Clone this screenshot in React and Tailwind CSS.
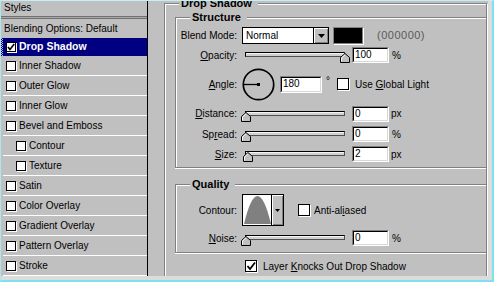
import React from "react";

function Check({ big }) {
  if (big)
    return (
      <svg width="10" height="10" viewBox="0 0 10 10" className="block">
        <path d="M1.5 5 L4 8 L9 1.5" fill="none" stroke="#000" strokeWidth="1.8" />
      </svg>
    );
  return (
    <svg width="8" height="8" viewBox="0 0 8 8" className="block">
      <path d="M1 4 L3 6.5 L7.2 1" fill="none" stroke="#000" strokeWidth="1.6" />
    </svg>
  );
}

function Box({ checked = false, big = false }) {
  return (
    <span
      className={
        big
          ? "block shrink-0 w-[12px] h-[12px] border border-black bg-white shadow-[1px_1px_0_#fff]"
          : "block shrink-0 w-[10px] h-[10px] border border-black bg-white shadow-[1px_1px_0_#fff]"
      }
    >
      {checked ? <Check big={big} /> : null}
    </span>
  );
}

function Slider({ pos }) {
  return (
    <div className="relative shrink-0 w-[108px] h-[16px] ml-[4px]">
      <div className="mt-[5px] mx-[4px] h-[5px] border border-black border-b-[#505050] border-r-[#505050] bg-[#d0d0d0] shadow-[inset_0_1px_0_#f4f4f4]" />
      <svg className="absolute top-[6px]" style={{ left: pos }} width="10" height="10" viewBox="0 0 10 10">
        <path d="M0.5 9.5V4.5L5 0.5L9.5 4.5V9.5Z" fill="#c0c0c0" stroke="#000" />
        <path d="M1.5 8.5V5L5 1.8" fill="none" stroke="#fff" />
      </svg>
    </div>
  );
}

function Field({ value, wide = false }) {
  return (
    <div
      className={
        wide
          ? "ml-[5px] shrink-0 w-[42px] h-[17px] border border-[#808080] border-b-white border-r-white"
          : "ml-[3px] shrink-0 w-[37px] h-[16px] border border-[#808080] border-b-white border-r-white"
      }
    >
      <div className="h-full border border-black border-b-[#d8d8d8] border-r-[#d8d8d8] bg-white pl-[1px] text-[10px] leading-[12px]">
        {value}
      </div>
    </div>
  );
}

function Label({ children }) {
  return <span className="w-[61px] shrink-0 text-right whitespace-nowrap">{children}</span>;
}

function Title({ children }) {
  return (
    <span className="absolute -top-[7px] left-[14px] bg-[#c0c0c0] pl-[2px] pr-[6px] font-bold text-[11px] leading-[13px] whitespace-nowrap">
      {children}
    </span>
  );
}

const listItems = [
  { t: "Inner Shadow" },
  { t: "Outer Glow" },
  { t: "Inner Glow" },
  { t: "Bevel and Emboss" },
  { t: "Contour", sub: true },
  { t: "Texture", sub: true },
  { t: "Satin" },
  { t: "Color Overlay" },
  { t: "Gradient Overlay" },
  { t: "Pattern Overlay" },
  { t: "Stroke" },
];

export default function App() {
  return (
    <div className="w-[494px] h-[282px] overflow-hidden border-t border-l border-r-2 border-b-2 border-t-[#c4f0f5] border-l-[#a8e8f0] border-r-[#7ee2ee] border-b-[#7ee2ee] bg-[#dcdcdc] font-['Liberation_Sans',Arial,sans-serif] text-[10px] text-black">
      <div className="w-[487px] h-[275px] bg-[#c0c0c0] flex overflow-hidden">
        {/* Left styles list */}
        <div className="w-[147px] shrink-0 border-r border-black flex flex-col">
          <div className="h-[18px] pl-[3px] leading-[14px]">Styles</div>
          <div className="h-px bg-[#707070]" />
          <div className="h-px bg-[#a8a8a8]" />
          <div className="h-px bg-[#707070]" />
          <div className="h-[19px] pl-[3px] leading-[19px] whitespace-nowrap">Blending Options: Default</div>
          <div className="h-[21px] flex">
            <div className="w-[2px] bg-[repeating-conic-gradient(#000080_0_25%,#c0c0c0_0_50%)] bg-[length:2px_2px]" />
            <div className="flex-1 bg-[#000080] flex items-center pl-[3px]">
              <Box checked />
              <span className="ml-[3px] text-white font-bold text-[10.5px]">Drop Shadow</span>
            </div>
          </div>
          {listItems.map((it) => (
            <div
              key={it.t}
              className={
                it.sub
                  ? "shrink-0 h-[20px] ml-[2px] border-b border-white flex items-center pl-[13px]"
                  : "shrink-0 h-[20px] ml-[2px] border-b border-white flex items-center pl-[3px]"
              }
            >
              <Box />
              <span className="ml-[3px] whitespace-nowrap">{it.t}</span>
            </div>
          ))}
        </div>

        {/* Right settings */}
        <div className="flex-1 pl-[16px] pt-[2px]">
          <div className="relative w-[323px] border border-[#808080] shadow-[inset_1px_1px_0_#fff,1px_1px_0_#fff] pl-[10px] pt-[13px] pb-[20px]">
            <Title>Drop Shadow</Title>

            {/* Structure */}
            <div className="relative border border-r-0 border-[#808080] shadow-[inset_1px_1px_0_#fff,0_1px_0_#fff] pt-[8px] pb-[3px]">
              <Title>Structure</Title>
              <div className="flex items-center h-[19px]">
                <Label>Blend Mode:</Label>
                <div className="ml-[5px] flex shrink-0 w-[87px] h-[17px] border border-black bg-white">
                  <span className="flex-1 pl-[3px] leading-[15px]">Normal</span>
                  <div className="w-[15px] h-full border-l border-black bg-[#c0c0c0] shadow-[inset_1px_1px_0_#fff,inset_-1px_-1px_0_#808080] flex items-center justify-center">
                    <svg width="7" height="4" viewBox="0 0 7 4" className="block">
                      <path d="M0 0H7L3.5 4Z" fill="#000" />
                    </svg>
                  </div>
                </div>
                <div className="ml-[4px] shrink-0 w-[30px] h-[17px] border border-[#808080] bg-black shadow-[1px_1px_0_#fff]" />
                <span className="ml-[14px] text-[11px] tracking-[0.5px] text-[#5a5a5a]">(000000)</span>
              </div>

              <div className="flex items-center h-[20px]">
                <Label>
                  <span className="underline">O</span>pacity:
                </Label>
                <Slider pos={99} />
                <Field value="100" />
                <span className="ml-[3px]">%</span>
              </div>

              <div className="flex items-center h-[38px]">
                <Label>
                  <span className="underline">A</span>ngle:
                </Label>
                <svg className="ml-[5px] shrink-0 block" width="33" height="33" viewBox="0 0 33 33">
                  <circle cx="16.5" cy="16.5" r="15.2" fill="none" stroke="#000" strokeWidth="1.7" />
                  <path d="M1.5 16.5H16.5" stroke="#000" strokeWidth="1.3" />
                  <rect x="15" y="15" width="3" height="3" fill="#000" />
                </svg>
                <Field value="180" wide />
                <span className="self-start mt-[11px] ml-[4px] leading-[10px]">°</span>
                <div className="ml-[7px]">
                  <Box big />
                </div>
                <span className="ml-[6px] whitespace-nowrap">
                  Use <span className="underline">G</span>lobal Light
                </span>
              </div>

              <div className="flex items-center h-[21px]">
                <Label>
                  <span className="underline">D</span>istance:
                </Label>
                <Slider pos={0} />
                <Field value="0" />
                <span className="ml-[2px]">px</span>
              </div>

              <div className="flex items-center h-[20px]">
                <Label>
                  Sp<span className="underline">r</span>ead:
                </Label>
                <Slider pos={0} />
                <Field value="0" />
                <span className="ml-[3px]">%</span>
              </div>

              <div className="flex items-center h-[20px]">
                <Label>
                  <span className="underline">S</span>ize:
                </Label>
                <Slider pos={2} />
                <Field value="2" />
                <span className="ml-[2px]">px</span>
              </div>
            </div>

            {/* Quality */}
            <div className="relative mt-[16px] border border-r-0 border-[#808080] shadow-[inset_1px_1px_0_#fff,0_1px_0_#fff] pt-[8px] pb-[3px]">
              <Title>Quality</Title>
              <div className="flex items-center h-[34px]">
                <Label>Contour:</Label>
                <div className="ml-[5px] flex shrink-0 w-[42px] h-[32px] border border-black bg-white">
                  <div className="w-[29px] h-full p-[1px] border-r border-black">
                    <svg width="27" height="28" viewBox="0 0 28 28" preserveAspectRatio="none" className="block">
                      <path d="M0 28 Q14 -28 28 28Z" fill="#808080" />
                    </svg>
                  </div>
                  <div className="flex-1 bg-[#c0c0c0] shadow-[inset_1px_1px_0_#fff,inset_-1px_-1px_0_#808080] flex items-center justify-center">
                    <svg width="5" height="3" viewBox="0 0 5 3" className="block">
                      <path d="M0 0H5L2.5 3Z" fill="#000" />
                    </svg>
                  </div>
                </div>
                <div className="ml-[14px]">
                  <Box big />
                </div>
                <span className="ml-[4px] whitespace-nowrap">
                  Anti-al<span className="underline">i</span>ased
                </span>
              </div>
              <div className="flex items-center h-[22px]">
                <Label>
                  <span className="underline">N</span>oise:
                </Label>
                <Slider pos={0} />
                <Field value="0" />
                <span className="ml-[3px]">%</span>
              </div>
            </div>

            <div className="mt-[3px] h-[20px] flex items-center pl-[70px]">
              <Box big checked />
              <span className="ml-[6px] whitespace-nowrap">
                Layer <span className="underline">K</span>nocks Out Drop Shadow
              </span>
            </div>
          </div>
        </div>
      </div>
    </div>
  );
}
